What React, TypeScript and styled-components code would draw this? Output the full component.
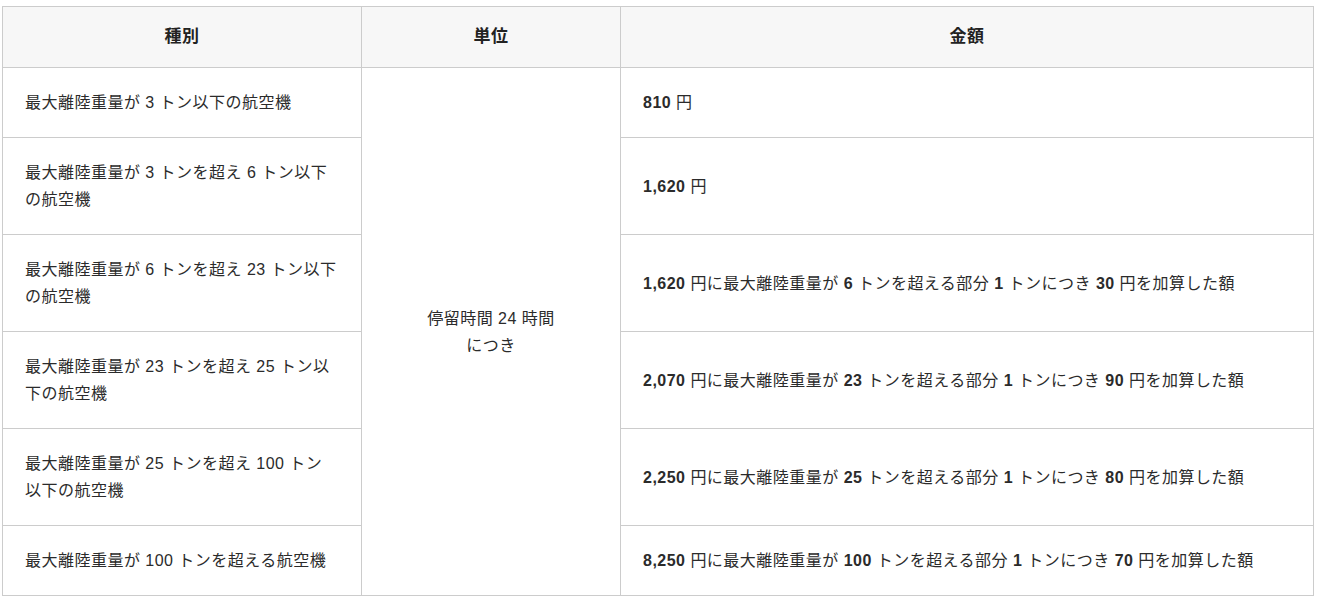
import styled, { createGlobalStyle } from "styled-components";

const GlobalStyle = createGlobalStyle`
  body {
    margin: 0;
    background: #fff;
    font-family: "Liberation Sans", "Noto Sans CJK JP", sans-serif;
    color: #2b2b2b;
  }
`;

interface FeeRow {
  kind: React.ReactNode;
  amount: React.ReactNode;
}

const rows: FeeRow[] = [
  {
    kind: "最大離陸重量が 3 トン以下の航空機",
    amount: (
      <>
        <Num>810</Num> 円
      </>
    ),
  },
  {
    kind: (
      <>
        最大離陸重量が 3 トンを超え 6 トン以下
        <br />
        の航空機
      </>
    ),
    amount: (
      <>
        <Num>1,620</Num> 円
      </>
    ),
  },
  {
    kind: (
      <>
        最大離陸重量が 6 トンを超え 23 トン以下
        <br />
        の航空機
      </>
    ),
    amount: (
      <>
        <Num>1,620</Num> 円に最大離陸重量が <Num>6</Num> トンを超える部分{" "}
        <Num>1</Num> トンにつき <Num>30</Num> 円を加算した額
      </>
    ),
  },
  {
    kind: (
      <>
        最大離陸重量が 23 トンを超え 25 トン以
        <br />
        下の航空機
      </>
    ),
    amount: (
      <>
        <Num>2,070</Num> 円に最大離陸重量が <Num>23</Num> トンを超える部分{" "}
        <Num>1</Num> トンにつき <Num>90</Num> 円を加算した額
      </>
    ),
  },
  {
    kind: (
      <>
        最大離陸重量が 25 トンを超え 100 トン
        <br />
        以下の航空機
      </>
    ),
    amount: (
      <>
        <Num>2,250</Num> 円に最大離陸重量が <Num>25</Num> トンを超える部分{" "}
        <Num>1</Num> トンにつき <Num>80</Num> 円を加算した額
      </>
    ),
  },
  {
    kind: "最大離陸重量が 100 トンを超える航空機",
    amount: (
      <>
        <Num>8,250</Num> 円に最大離陸重量が <Num>100</Num> トンを超える部分{" "}
        <Num>1</Num> トンにつき <Num>70</Num> 円を加算した額
      </>
    ),
  },
];

export default function App() {
  return (
    <Wrapper>
      <GlobalStyle />
      <Table>
        <colgroup>
          <col style={{ width: 359 }} />
          <col style={{ width: 259 }} />
          <col />
        </colgroup>
        <thead>
          <tr>
            <Th>種別</Th>
            <Th>単位</Th>
            <Th>金額</Th>
          </tr>
        </thead>
        <tbody>
          {rows.map((row, i) => (
            <tr key={i}>
              <Td $nowrap>{row.kind}</Td>
              {i === 0 && (
                <Td rowSpan={rows.length} $center>
                  停留時間 24 時間
                  <br />
                  につき
                </Td>
              )}
              <Td>{row.amount}</Td>
            </tr>
          ))}
        </tbody>
      </Table>
    </Wrapper>
  );
}

function Num({ children }: { children: React.ReactNode }) {
  return <Strong>{children}</Strong>;
}

const Wrapper = styled.div`
  padding: 6px 0 0 2px;
`;

const Table = styled.table`
  width: 1312px;
  table-layout: fixed;
  border-collapse: collapse;
  font-size: 16px;
  letter-spacing: 0.03em;
`;

const Th = styled.th`
  background: #f7f7f7;
  border: 1px solid #cccccc;
  padding: 17px 22px;
  font-size: 17px;
  line-height: 26px;
  font-weight: bold;
  color: #222;
  text-align: center;
`;

const Td = styled.td<{ $center?: boolean; $nowrap?: boolean }>`
  border: 1px solid #cccccc;
  padding: 21px 22px;
  line-height: 27px;
  vertical-align: middle;
  white-space: ${(p) => (p.$nowrap ? "nowrap" : "normal")};
  text-align: ${(p) => (p.$center ? "center" : "left")};
`;

const Strong = styled.span`
  font-weight: bold;
`;
